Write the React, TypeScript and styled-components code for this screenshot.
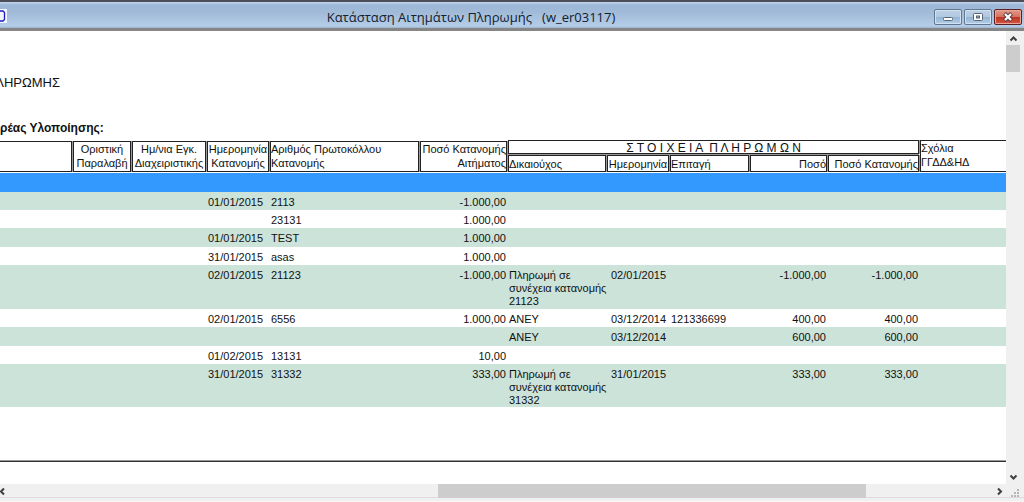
import React from 'react';
import styled, { createGlobalStyle, css } from 'styled-components';

const GlobalStyle = createGlobalStyle`
  * { box-sizing: border-box; }
  body { margin: 0; background: #f0f0f0; font-family: 'Liberation Sans', Arial, sans-serif; color: #111; }
  button { padding: 0; border: 0; background: none; font: inherit; }
`;

const Window = styled.div`
  display: flex;
  flex-direction: column;
  min-height: 100vh;
  overflow: hidden;
`;

const TitleBar = styled.header`
  display: flex;
  align-items: center;
  height: 31px;
  padding-right: 2px;
  border-top: 2px solid #4c4e5c;
  border-bottom: 3px solid #868686;
  background: linear-gradient(#c4d6ea 0, #9db8d7 3px, #a0bad8 10px, #b4cde8 24px, #9fb4cc 26px);
`;

const AppIcon = styled.svg`
  flex: none;
  width: 7px;
  height: 14px;
  margin-top: 2px;
`;

const Title = styled.h1`
  flex: 1;
  margin: 0;
  padding-left: 1px;
  text-align: center;
  white-space: pre;
  font: 400 13px/22px 'Open Sans', 'Noto Sans', sans-serif;
  color: #14202e;
  padding-top: 3px;
`;

const WindowButtons = styled.div`
  display: flex;
  gap: 2px;
  padding-top: 3px;
`;

const WindowButton = styled.button<{ $danger?: boolean }>`
  display: flex;
  align-items: center;
  justify-content: center;
  width: 28px;
  height: 16px;
  border: 1px solid ${p => (p.$danger ? '#5c1f22' : '#62788f')};
  border-radius: 2px;
  box-shadow: inset 0 0 0 1px ${p => (p.$danger ? '#e9a79b' : '#d3e2f1')};
  background: ${p => (p.$danger
    ? 'linear-gradient(#e09a8c 0, #d4705f 50%, #bd3423 50%, #d4563f 100%)'
    : 'linear-gradient(#bdd0e5 0, #b0c8e1 50%, #94b2d2 50%, #b2cee9 100%)')};
`;

const Middle = styled.div`
  display: flex;
  flex: 1;
  padding-right: 4px;
`;

const Page = styled.main`
  flex: 1;
  min-width: 0;
  padding-top: 43px;
  overflow: hidden;
  background: #fff;
`;

const ReportTitle = styled.h2`
  display: flex;
  justify-content: flex-end;
  width: 60px;
  margin: 0 0 29px;
  font-size: 13px;
  font-weight: 400;
  line-height: 18px;
`;

const AgencyLabel = styled.h3`
  margin: 0 0 5px;
  white-space: nowrap;
  font-size: 12px;
  line-height: 14px;
`;

const Table = styled.table`
  width: 100%;
  table-layout: fixed;
  border-collapse: collapse;
  font-size: 11px;
  line-height: 13px;
`;

const Col = styled.col<{ $w?: number }>`
  ${p => p.$w && css`width: ${p.$w}px;`}
`;

const HeadCell = styled.th`
  padding: 0;
  vertical-align: top;
  font-weight: 400;
  line-height: 14px;
`;

const HeadBox = styled.div<{ $kind?: 'first' | 'group' | 'sub'; $align?: string; $open?: boolean }>`
  height: 31px;
  margin-top: 1px;
  overflow: hidden;
  border: 1px solid #222;
  box-shadow: 1px 0 #999;
  margin-right: 1px;
  white-space: pre;
  text-align: ${p => p.$align || 'left'};
  ${p => p.$kind === 'first' && css`
    border-left: 0;
  `}
  ${p => p.$kind === 'group' && css`
    height: 14px;
    margin-top: 0;
    margin-bottom: 1px;
    box-shadow: 0 1px #999, 1px 0 #999;
    font-size: 12px;
  `}
  ${p => p.$kind === 'sub' && css`
    height: 17px;
    margin-top: 0;
    line-height: 16px;
  `}
  ${p => p.$open && css`
    height: 32px;
    margin: 0;
    border-right: 0;
    box-shadow: none;
  `}
`;

const Row = styled.tr<{ $tone: 'selected' | 'green' | 'white'; $h: number }>`
  height: ${p => p.$h}px;
  background: ${p => ({ selected: '#3399ff', green: '#cce3da', white: '#fff' })[p.$tone]};
`;

const Cell = styled.td<{ $right?: boolean; $inset?: boolean }>`
  padding: 4px 2px 0 ${p => (p.$inset ? 4 : 1)}px;
  vertical-align: top;
  white-space: pre;
  text-align: ${p => (p.$right ? 'right' : 'left')};
`;

const HeadGap = styled.tr`
  height: 1px;
  td { padding: 0; }
`;

const PageRule = styled.hr`
  height: 2px;
  margin: 53px 0 22px;
  border: 0;
  border-top: 1px solid #999;
  border-bottom: 1px solid #333;
`;

const VScroll = styled.div`
  display: flex;
  flex-direction: column;
  width: 14px;
`;

const HScroll = styled.div`
  display: flex;
  height: 18px;
  padding-right: 4px;
  border-bottom: 1px solid #f7f7f7;
  box-shadow: inset 0 -3px #f0f0f0, inset 0 -4px #dcdcdc;
`;

const ArrowButton = styled.button`
  display: flex;
  align-items: center;
  justify-content: center;
  flex: none;
  width: 14px;
  height: 14px;
`;

const EdgeArrow = styled(ArrowButton)`
  width: 8px;
  justify-content: flex-start;
`;

const Track = styled.div<{ $grow: number }>`
  flex: ${p => p.$grow} 1 0;
`;

const Thumb = styled.div<{ $grow: number }>`
  flex: ${p => p.$grow} 1 0;
  background: #cdcdcd;
`;

const HThumb = styled(Thumb)`
  height: 14px;
`;

const Grip = styled.svg`
  flex: none;
  width: 14px;
  height: 14px;
`;

type Line = {
  tone: 'selected' | 'green' | 'white';
  h: number;
  date?: string;
  protocol?: string;
  amount?: string;
  payee?: string;
  payDate?: string;
  cheque?: string;
  sum?: string;
  allocated?: string;
};

const lines: Line[] = [
  { tone: 'selected', h: 19 },
  { tone: 'green', h: 18, date: '01/01/2015', protocol: '2113', amount: '-1.000,00' },
  { tone: 'white', h: 18, protocol: '23131', amount: '1.000,00' },
  { tone: 'green', h: 19, date: '01/01/2015', protocol: 'TEST', amount: '1.000,00' },
  { tone: 'white', h: 18, date: '31/01/2015', protocol: 'asas', amount: '1.000,00' },
  { tone: 'green', h: 44, date: '02/01/2015', protocol: '21123', amount: '-1.000,00', payee: 'Πληρωμή σε\nσυνέχεια κατανομής\n21123', payDate: '02/01/2015', sum: '-1.000,00', allocated: '-1.000,00' },
  { tone: 'white', h: 18, date: '02/01/2015', protocol: '6556', amount: '1.000,00', payee: 'ΑΝΕΥ', payDate: '03/12/2014', cheque: '121336699', sum: '400,00', allocated: '400,00' },
  { tone: 'green', h: 19, payee: 'ΑΝΕΥ', payDate: '03/12/2014', sum: '600,00', allocated: '600,00' },
  { tone: 'white', h: 18, date: '01/02/2015', protocol: '13131', amount: '10,00' },
  { tone: 'green', h: 43, date: '31/01/2015', protocol: '31332', amount: '333,00', payee: 'Πληρωμή σε\nσυνέχεια κατανομής\n31332', payDate: '31/01/2015', sum: '333,00', allocated: '333,00' },
];

const mainHeads = [
  { text: '', align: 'left' },
  { text: 'Οριστική\nΠαραλαβή', align: 'center' },
  { text: 'Ημ/νια Εγκ.\nΔιαχειριστικής', align: 'center' },
  { text: 'Ημερομηνία\nΚατανομής', align: 'center' },
  { text: 'Αριθμός Πρωτοκόλλου\nΚατανομής', align: 'left' },
  { text: 'Ποσό Κατανομής\nΑιτήματος', align: 'right' },
];

const subHeads = [
  { text: 'Δικαιούχος', align: 'left' },
  { text: 'Ημερομηνία', align: 'center' },
  { text: 'Επιταγή', align: 'left' },
  { text: 'Ποσό', align: 'right' },
  { text: 'Ποσό Κατανομής', align: 'right' },
];

const columnWidths = [73, 59, 75, 63, 150, 88, 99, 63, 80, 78, 92];

const Chevron = ({ d, w = 9, h = 9 }: { d: string; w?: number; h?: number }) => (
  <svg width={w} height={h} viewBox={`0 0 ${w} ${h}`} fill="none" stroke="#404040" strokeWidth="2" aria-hidden="true">
    <path d={d} />
  </svg>
);

export default function App() {
  return (
    <>
      <GlobalStyle />
      <Window>
        <TitleBar>
          <AppIcon viewBox="0 0 7 14" aria-hidden="true">
            <rect width="7" height="14" fill="#f4f6ff" />
            <path d="M0 2H3L4.500 3.500V10.500L3 12H0" fill="none" stroke="#1c1cc0" strokeWidth="1.300" />
          </AppIcon>
          <Title>{'Κατάσταση Αιτημάτων Πληρωμής   (w_er03117)'}</Title>
          <WindowButtons>
            <WindowButton aria-label="Ελαχιστοποίηση">
              <svg width="12" height="10" aria-hidden="true">
                <rect x="1.500" y="5.500" width="9" height="3" rx="1" fill="#fff" stroke="#5a6573" />
              </svg>
            </WindowButton>
            <WindowButton aria-label="Μεγιστοποίηση">
              <svg width="12" height="10" aria-hidden="true">
                <rect x="1.500" y="1.500" width="9" height="7" rx="1" fill="#fff" stroke="#5a6573" />
                <rect x="4.500" y="4" width="3" height="2" fill="#8fa9c6" stroke="#5a6573" />
              </svg>
            </WindowButton>
            <WindowButton $danger aria-label="Κλείσιμο">
              <svg width="12" height="10" aria-hidden="true">
                <path d="M2.500 1.500L9.500 8.500M9.500 1.500L2.500 8.500" stroke="#5c3a42" strokeWidth="4" />
                <path d="M3 2L9 8M9 2L3 8" stroke="#fff" strokeWidth="2.200" />
              </svg>
            </WindowButton>
          </WindowButtons>
        </TitleBar>
        <Middle>
          <Page>
            <ReportTitle>ΛΗΡΩΜΗΣ</ReportTitle>
            <AgencyLabel>ρέας Υλοποίησης:</AgencyLabel>
            <Table>
              <colgroup>
                {columnWidths.map((w, i) => <Col key={i} $w={w} />)}
                <Col />
              </colgroup>
              <thead>
                <tr>
                  {mainHeads.map((h, i) => (
                    <HeadCell key={i} rowSpan={2} scope="col">
                      <HeadBox $kind={i === 0 ? 'first' : undefined} $align={h.align}>{h.text}</HeadBox>
                    </HeadCell>
                  ))}
                  <HeadCell colSpan={5} scope="colgroup">
                    <HeadBox $kind="group" $align="center">{'Σ Τ Ο Ι Χ Ε Ι Α  Π Λ Η Ρ Ω Μ Ω Ν'}</HeadBox>
                  </HeadCell>
                  <HeadCell rowSpan={2} scope="col">
                    <HeadBox $open>{'Σχόλια\nΓΓΔΔ&ΗΔ'}</HeadBox>
                  </HeadCell>
                </tr>
                <tr>
                  {subHeads.map(h => (
                    <HeadCell key={h.text} scope="col">
                      <HeadBox $kind="sub" $align={h.align}>{h.text}</HeadBox>
                    </HeadCell>
                  ))}
                </tr>
              </thead>
              <tbody>
                <HeadGap><td colSpan={12} /></HeadGap>
                {lines.map((l, i) => (
                  <Row key={i} $tone={l.tone} $h={l.h}>
                    <Cell />
                    <Cell />
                    <Cell />
                    <Cell>{l.date}</Cell>
                    <Cell>{l.protocol}</Cell>
                    <Cell $right>{l.amount}</Cell>
                    <Cell>{l.payee}</Cell>
                    <Cell $inset>{l.payDate}</Cell>
                    <Cell>{l.cheque}</Cell>
                    <Cell $right>{l.sum}</Cell>
                    <Cell $right>{l.allocated}</Cell>
                    <Cell />
                  </Row>
                ))}
              </tbody>
            </Table>
            <PageRule />
          </Page>
          <VScroll>
            <ArrowButton aria-label="Πάνω"><Chevron d="M1.500 6.500L4.500 3.500L7.500 6.500" /></ArrowButton>
            <Thumb $grow={27} />
            <Track $grow={398} />
            <ArrowButton aria-label="Κάτω"><Chevron d="M1.500 2.500L4.500 5.500L7.500 2.500" /></ArrowButton>
          </VScroll>
        </Middle>
        <HScroll>
          <EdgeArrow aria-label="Αριστερά"><Chevron w={5} d="M4 1.500L1 4.500L4 7.500" /></EdgeArrow>
          <Track $grow={430} />
          <HThumb $grow={428} />
          <Track $grow={126} />
          <ArrowButton aria-label="Δεξιά"><Chevron d="M3 1.500L6 4.500L3 7.500" /></ArrowButton>
          <Grip viewBox="0 0 14 14" fill="#b5b5b5" aria-hidden="true">
            <path d="M11 5h2v2h-2zM8 8h2v2h-2zM11 8h2v2h-2zM5 11h2v2h-2zM8 11h2v2h-2zM11 11h2v2h-2z" />
          </Grip>
        </HScroll>
      </Window>
    </>
  );
}
